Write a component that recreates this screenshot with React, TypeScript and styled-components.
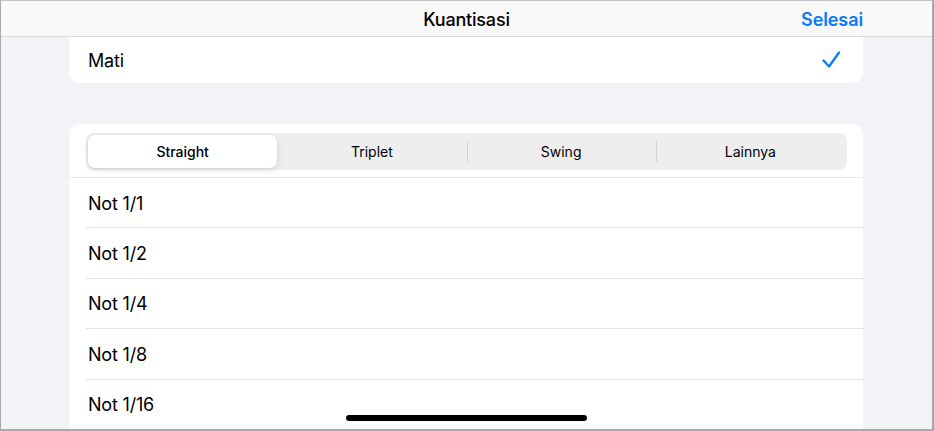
import React from "react";
import styled, { createGlobalStyle } from "styled-components";

const Global = createGlobalStyle`
  html, body { margin: 0; padding: 0; background: #ffffff; }
  body { font-family: Inter, "Noto Sans", "Liberation Sans", sans-serif; -webkit-font-smoothing: antialiased; }
  * { box-sizing: border-box; }
`;

const Frame = styled.div`
  position: relative;
  width: 934px;
  height: 431px;
  overflow: hidden;
  background: #f2f2f7;
  border-left: 1px solid #a9a9ad;
  border-right: 2px solid #a9a9ad;
  border-bottom: 2px solid #a9a9ad;
  border-top: 1px solid #c4c4c7;
  display: flex;
  flex-direction: column;
`;

const Header = styled.header`
  flex: none;
  height: 36px;
  background: #f9f9f9;
  border-bottom: 1px solid #dadadd;
  display: grid;
  grid-template-columns: 1fr auto 1fr;
  align-items: center;
  padding: 0 69px;
`;

const Title = styled.h1`
  grid-column: 2;
  margin: 0;
  font-size: 18px;
  font-weight: 500;
  color: #000;
  letter-spacing: -0.2px;
  padding-top: 1px;
`;

const Done = styled.button`
  grid-column: 3;
  justify-self: end;
  border: 0;
  background: none;
  padding: 0;
  font: inherit;
  font-size: 18px;
  font-weight: 600;
  color: #0a7aff;
  letter-spacing: -0.1px;
  padding-top: 1px;
`;

const Content = styled.main`
  flex: 1;
  padding: 0 69px 0 68px;
  display: flex;
  flex-direction: column;
  gap: 41px;
`;

const Card = styled.section<{ $clippedTop?: boolean }>`
  background: #fff;
  border-radius: ${(p) => (p.$clippedTop ? "0 0 10px 10px" : "10px 10px 0 0")};
  flex: ${(p) => (p.$clippedTop ? "none" : "1")};
  display: flex;
  flex-direction: column;
`;

const OptionRow = styled.div`
  height: 46px;
  display: flex;
  align-items: center;
  justify-content: space-between;
  padding: 0 22px 0 19px;
  font-size: 18px;
  color: #000;
  letter-spacing: -0.2px;
`;

const Segmented = styled.div`
  margin: 9px 16px 0 17px;
  height: 37px;
  background: #eeeeef;
  border-radius: 8px;
  display: grid;
  grid-template-columns: repeat(4, 1fr);
  padding: 2px;
`;

const Segment = styled.div<{ $active?: boolean; $divider?: boolean }>`
  position: relative;
  display: flex;
  align-items: center;
  justify-content: center;
  font-size: 14px;
  font-weight: ${(p) => (p.$active ? 500 : 400)};
  color: #000;
  border-radius: 7px;
  background: ${(p) => (p.$active ? "#fff" : "transparent")};
  box-shadow: ${(p) =>
    p.$active ? "0 2px 6px rgba(0,0,0,0.12), 0 0 0 0.5px rgba(0,0,0,0.04)" : "none"};
  &::before {
    content: "";
    display: ${(p) => (p.$divider ? "block" : "none")};
    position: absolute;
    left: 0;
    top: 6px;
    bottom: 6px;
    width: 1px;
    background: #d3d3d6;
  }
`;

const SectionRule = styled.div`
  height: 1px;
  background: #e6e6ea;
  margin-top: 7px;
`;

const List = styled.div`
  display: flex;
  flex-direction: column;
  padding-left: 17px;
`;

const Row = styled.div`
  height: 50.4px;
  display: flex;
  align-items: center;
  padding-left: 2px;
  padding-top: 1px;
  font-size: 18px;
  color: #000;
  letter-spacing: -0.2px;
  border-bottom: 1px solid #e3e3e7;
`;

const HomeIndicator = styled.div`
  position: absolute;
  left: 345px;
  bottom: 8px;
  width: 241px;
  height: 6px;
  border-radius: 3px;
  background: #000;
`;

const Check = () => (
  <svg width="20" height="18" viewBox="0 0 20 18" fill="none">
    <path
      d="M2.5 9.5 L8 15.5 L18 1.5"
      stroke="#0a7aff"
      strokeWidth="2.3"
      strokeLinecap="round"
      strokeLinejoin="round"
    />
  </svg>
);

const segments = ["Straight", "Triplet", "Swing", "Lainnya"];
const notes = ["Not 1/1", "Not 1/2", "Not 1/4", "Not 1/8", "Not 1/16"];

export default function App() {
  const active = 0;
  return (
    <>
      <Global />
      <Frame>
        <Header>
          <Title>Kuantisasi</Title>
          <Done>Selesai</Done>
        </Header>
        <Content>
          <Card $clippedTop>
            <OptionRow>
              <span>Mati</span>
              <Check />
            </OptionRow>
          </Card>
          <Card>
            <Segmented>
              {segments.map((s, i) => (
                <Segment
                  key={s}
                  $active={i === active}
                  $divider={i > 0 && i !== active && i - 1 !== active}
                >
                  {s}
                </Segment>
              ))}
            </Segmented>
            <SectionRule />
            <List>
              {notes.map((n) => (
                <Row key={n}>{n}</Row>
              ))}
            </List>
          </Card>
        </Content>
        <HomeIndicator />
      </Frame>
    </>
  );
}
